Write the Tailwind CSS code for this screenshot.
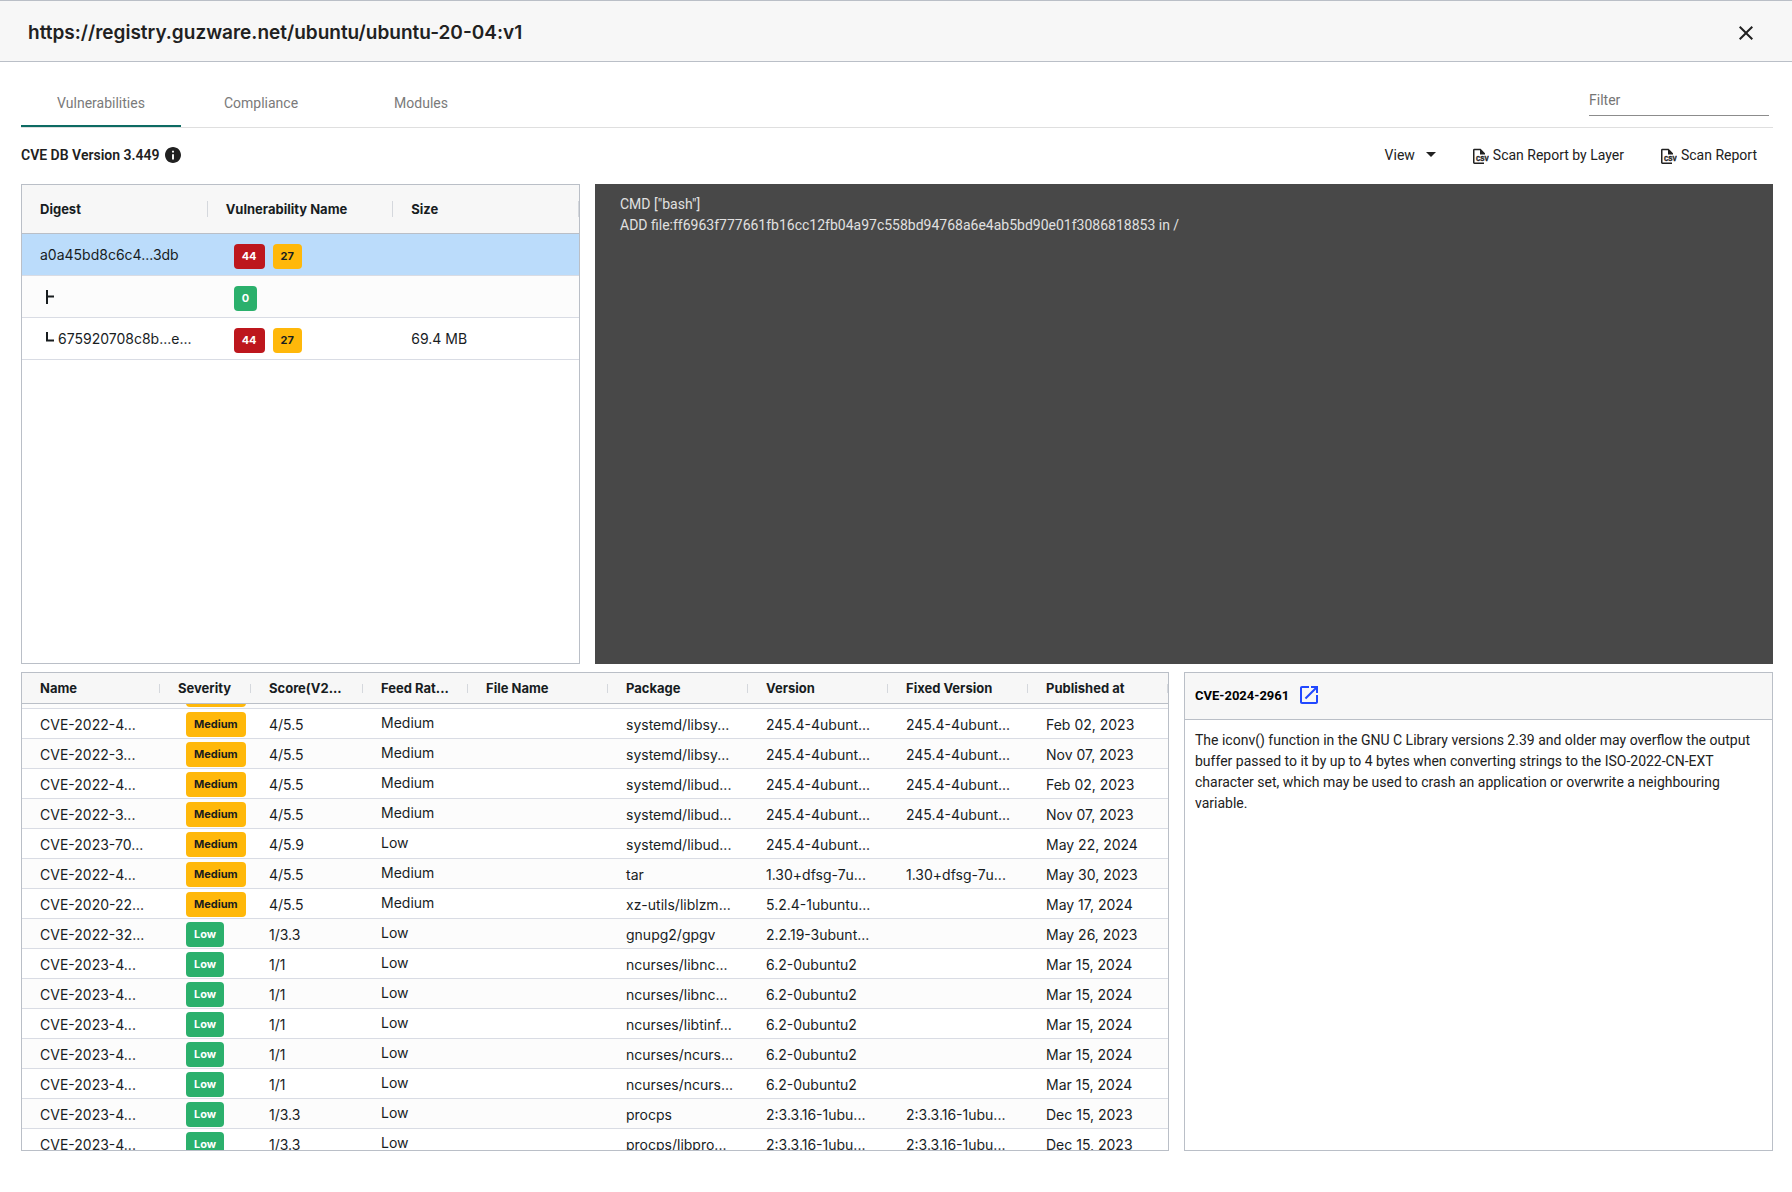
<!DOCTYPE html>
<html lang="en">
<head>
    <meta charset="UTF-8">
    <meta name="viewport" content="width=device-width, initial-scale=1.0">
    <title>Registry Scan Result</title>
    <script src="https://cdn.jsdelivr.net/npm/@tailwindcss/browser@4"></script>
</head>
<body class="min-h-screen bg-white font-['Roboto',sans-serif] text-sm text-[#212121]">
    <header class="flex h-[62px] items-center justify-between border-y border-[#babfc7] bg-[#f7f7f7] pt-1 pl-7 pr-[34px]">
        <h1 class="font-['Inter',sans-serif] text-[19px] leading-6 font-semibold">https://registry.guzware.net/ubuntu/ubuntu-20-04:v1</h1>
        <button type="button" aria-label="Close" class="cursor-pointer">
            <svg class="size-6" viewBox="0 0 24 24" fill="currentColor">
                <path d="M19 6.41L17.59 5 12 10.59 6.41 5 5 6.41 10.59 12 5 17.59 6.41 19 12 13.41 17.59 19 19 17.59 13.41 12z"/>
            </svg>
        </button>
    </header>

    <main class="pt-[17px] pr-[19px] pl-[21px]">
        <!-- Tabs and filter -->
        <div class="flex items-end justify-between border-b border-[#dfdfdf]">
            <nav class="flex h-12 text-[#7a7a7a]">
                <button type="button" class="w-40 cursor-pointer border-b-2 border-[#0d6b63] pt-[2px]">Vulnerabilities</button>
                <button type="button" class="w-40 cursor-pointer border-b-2 border-transparent pt-[2px]">Compliance</button>
                <button type="button" class="w-40 cursor-pointer border-b-2 border-transparent pt-[2px]">Modules</button>
            </nav>
            <input type="text" aria-label="Filter" placeholder="Filter" class="mr-1 mb-[11px] h-8 w-[180px] border-b border-[#8c8c8c] placeholder:text-[#757575] outline-none">
        </div>

        <!-- Toolbar -->
        <div class="flex h-14 items-center justify-between pb-[3px]">
            <div class="flex items-center gap-[5px] font-semibold">
                CVE DB Version 3.449
                <svg class="size-4" viewBox="2 2 20 20" fill="currentColor">
                    <path d="M12 2C6.48 2 2 6.48 2 12s4.48 10 10 10 10-4.48 10-10S17.52 2 12 2zm1.200 15.500h-2.400v-6.500h2.400v6.500zm0-8.500h-2.400V6.600h2.400V9z"/>
                </svg>
            </div>
            <div class="flex items-center pr-4">
                <button type="button" class="flex cursor-pointer items-center gap-[11px]">
                    View
                    <svg class="h-[5px] w-2.5" viewBox="0 0 10 5" fill="currentColor"><path d="M0 0h10L5 5z"/></svg>
                </button>
                <button type="button" class="ml-9 flex cursor-pointer items-center gap-1">
                    <svg class="mt-1 size-[17px]" viewBox="0 0 17 17" fill="currentColor">
                        <path d="M1 2.200Q1 .8 2.400 .8H8.600L13 5.200V6.500H8V2.200H2.500V14.600H12V16H2.400Q1 16 1 14.600z"/>
                        <text x="4" y="13" font-family="Liberation Mono" font-size="7" font-weight="700" stroke="currentColor" stroke-width=".3">CSV</text>
                    </svg>
                    Scan Report by Layer
                </button>
                <button type="button" class="ml-9 flex cursor-pointer items-center gap-1">
                    <svg class="mt-1 size-[17px]" viewBox="0 0 17 17" fill="currentColor">
                        <path d="M1 2.200Q1 .8 2.400 .8H8.600L13 5.200V6.500H8V2.200H2.500V14.600H12V16H2.400Q1 16 1 14.600z"/>
                        <text x="4" y="13" font-family="Liberation Mono" font-size="7" font-weight="700" stroke="currentColor" stroke-width=".3">CSV</text>
                    </svg>
                    Scan Report
                </button>
            </div>
        </div>

        <!-- Layers -->
        <div class="grid grid-cols-[559fr_1178fr] gap-[15px]">
            <section class="h-[480px] overflow-hidden border border-[#babfc7]">
                <table class="w-full table-fixed border-separate border-spacing-0 text-left font-['Inter',sans-serif] text-[#181d1f]">
                    <thead class="bg-[#f7f7f7] text-[13px]">
                        <tr class="h-[49px]">
                            <th class="border-b border-[#babfc7] p-0 font-bold"><div class="flex h-4 items-center border-r border-[#d5d8dd] pl-[18px]">Digest</div></th>
                            <th class="border-b border-[#babfc7] p-0 font-bold"><div class="flex h-4 items-center border-r border-[#d5d8dd] pl-[18px]">Vulnerability Name</div></th>
                            <th class="border-b border-[#babfc7] p-0 font-bold"><div class="flex h-4 items-center border-r border-[#d5d8dd] pl-[18px]">Size</div></th>
                        </tr>
                    </thead>
                    <tbody>
                        <tr class="h-[42px] bg-[#bbdcfb]">
                            <td class="border-b border-[#d9dce4] p-0 pl-[18px]">a0a45bd8c6c4...3db</td>
                            <td class="border-b border-[#d9dce4] p-0 pl-[26px]">
                                <div class="flex gap-2 pt-1 text-[11px] leading-[25px] font-bold">
                                    <span class="rounded bg-[#bd171d] px-2 text-white">44</span>
                                    <span class="rounded bg-[#ffb80a] px-2">27</span>
                                </div>
                            </td>
                            <td class="border-b border-[#d9dce4] p-0"></td>
                        </tr>
                        <tr class="h-[42px] bg-[#fcfcfc]">
                            <td class="border-b border-[#d9dce4] p-0 pl-6">
                                <svg class="h-3.5 w-2" viewBox="0 0 8 14" fill="none" stroke="currentColor" stroke-width="2"><path d="M1 0v14M1 6.500h7"/></svg>
                            </td>
                            <td class="border-b border-[#d9dce4] p-0 pl-[26px]">
                                <div class="flex gap-2 pt-1 text-[11px] leading-[25px] font-bold">
                                    <span class="rounded bg-[#2bb06c] px-2 text-white">0</span>
                                </div>
                            </td>
                            <td class="border-b border-[#d9dce4] p-0"></td>
                        </tr>
                        <tr class="h-[42px]">
                            <td class="border-b border-[#d9dce4] p-0 pl-6">
                                <div class="flex items-center gap-1">
                                    <svg class="h-3.5 w-2" viewBox="0 0 8 14" fill="none" stroke="currentColor" stroke-width="2"><path d="M1 0v8.500h7"/></svg>
                                    675920708c8b...e...
                                </div>
                            </td>
                            <td class="border-b border-[#d9dce4] p-0 pl-[26px]">
                                <div class="flex gap-2 pt-1 text-[11px] leading-[25px] font-bold">
                                    <span class="rounded bg-[#bd171d] px-2 text-white">44</span>
                                    <span class="rounded bg-[#ffb80a] px-2">27</span>
                                </div>
                            </td>
                            <td class="border-b border-[#d9dce4] p-0 pl-[18px]">69.4 MB</td>
                        </tr>
                    </tbody>
                </table>
            </section>
            <section class="h-[480px] bg-[#484848] px-[25px] py-[10px] leading-[21px] text-[#e0e0e0]">
                <p>CMD ["bash"]</p>
                <p>ADD file:ff6963f777661fb16cc12fb04a97c558bd94768a6e4ab5bd90e01f3086818853 in /</p>
            </section>
        </div>

        <!-- Vulnerabilities -->
        <div class="mt-2 grid grid-cols-[1148fr_589fr] gap-[15px]">
            <section class="flex h-[479px] flex-col border border-[#babfc7] font-['Inter',sans-serif] text-[#181d1f]">
                <table class="w-full table-fixed border-separate border-spacing-0 bg-[#f7f7f7] text-left text-[13px]">
                    <colgroup>
                        <col class="w-[138px]">
                        <col class="w-[91px]">
                        <col class="w-[112px]">
                        <col class="w-[105px]">
                        <col span="5">
                    </colgroup>
                    <thead>
                        <tr id="cveHead" class="h-[31px]"></tr>
                    </thead>
                </table>
                <div class="min-h-0 flex-1 overflow-hidden">
                    <table class="-mt-[25px] w-full table-fixed border-separate border-spacing-0 text-left">
                        <colgroup>
                            <col class="w-[138px]">
                            <col class="w-[91px]">
                            <col class="w-[112px]">
                            <col class="w-[105px]">
                            <col span="5">
                        </colgroup>
                        <tbody id="cveRows"></tbody>
                    </table>
                </div>
            </section>
            <section class="h-[479px] border border-[#babfc7]">
                <div class="flex h-[47px] items-center gap-2 border-b border-[#babfc7] bg-[#f7f7f7] px-2.5">
                    <h2 class="text-[13px] font-bold text-black">CVE-2024-2961</h2>
                    <a href="#" aria-label="Open CVE-2024-2961" class="pb-[3px] text-[#2148ff]">
                        <svg class="size-6" viewBox="0 0 24 24" fill="currentColor">
                            <path d="M19 19H5V5h7V3H5c-1.110 0-2 .9-2 2v14c0 1.100.89 2 2 2h14c1.100 0 2-.9 2-2v-7h-2v7zM14 3v2h3.590l-9.830 9.830 1.410 1.410L19 6.410V10h2V3h-7z"/>
                        </svg>
                    </a>
                </div>
                <p class="px-2.5 py-[10px] leading-[21px]">The iconv() function in the GNU C Library versions 2.39 and older may overflow the output buffer passed to it by up to 4 bytes when converting strings to the ISO-2022-CN-EXT character set, which may be used to crash an application or overwrite a neighbouring variable.</p>
            </section>
        </div>
    </main>

    <script>
        const headers = ['Name', 'Severity', 'Score(V2...', 'Feed Rat...', 'File Name', 'Package', 'Version', 'Fixed Version', 'Published at'];

        // name, severity, score, feed rating, package, version, fixed version, published
        const cves = [
            ['', 'Medium', '', '', '', '', '', ''],
            ['CVE-2022-4...', 'Medium', '4/5.5', 'Medium', 'systemd/libsy...', '245.4-4ubunt...', '245.4-4ubunt...', 'Feb 02, 2023'],
            ['CVE-2022-3...', 'Medium', '4/5.5', 'Medium', 'systemd/libsy...', '245.4-4ubunt...', '245.4-4ubunt...', 'Nov 07, 2023'],
            ['CVE-2022-4...', 'Medium', '4/5.5', 'Medium', 'systemd/libud...', '245.4-4ubunt...', '245.4-4ubunt...', 'Feb 02, 2023'],
            ['CVE-2022-3...', 'Medium', '4/5.5', 'Medium', 'systemd/libud...', '245.4-4ubunt...', '245.4-4ubunt...', 'Nov 07, 2023'],
            ['CVE-2023-70...', 'Medium', '4/5.9', 'Low', 'systemd/libud...', '245.4-4ubunt...', '', 'May 22, 2024'],
            ['CVE-2022-4...', 'Medium', '4/5.5', 'Medium', 'tar', '1.30+dfsg-7u...', '1.30+dfsg-7u...', 'May 30, 2023'],
            ['CVE-2020-22...', 'Medium', '4/5.5', 'Medium', 'xz-utils/liblzm...', '5.2.4-1ubuntu...', '', 'May 17, 2024'],
            ['CVE-2022-32...', 'Low', '1/3.3', 'Low', 'gnupg2/gpgv', '2.2.19-3ubunt...', '', 'May 26, 2023'],
            ['CVE-2023-4...', 'Low', '1/1', 'Low', 'ncurses/libnc...', '6.2-0ubuntu2', '', 'Mar 15, 2024'],
            ['CVE-2023-4...', 'Low', '1/1', 'Low', 'ncurses/libnc...', '6.2-0ubuntu2', '', 'Mar 15, 2024'],
            ['CVE-2023-4...', 'Low', '1/1', 'Low', 'ncurses/libtinf...', '6.2-0ubuntu2', '', 'Mar 15, 2024'],
            ['CVE-2023-4...', 'Low', '1/1', 'Low', 'ncurses/ncurs...', '6.2-0ubuntu2', '', 'Mar 15, 2024'],
            ['CVE-2023-4...', 'Low', '1/1', 'Low', 'ncurses/ncurs...', '6.2-0ubuntu2', '', 'Mar 15, 2024'],
            ['CVE-2023-4...', 'Low', '1/3.3', 'Low', 'procps', '2:3.3.16-1ubu...', '2:3.3.16-1ubu...', 'Dec 15, 2023'],
            ['CVE-2023-4...', 'Low', '1/3.3', 'Low', 'procps/libpro...', '2:3.3.16-1ubu...', '2:3.3.16-1ubu...', 'Dec 15, 2023']
        ];

        const badges = {
            Medium: 'bg-[#ffb80a]',
            Low: 'bg-[#2bb06c] text-white'
        };

        document.getElementById('cveHead').innerHTML = headers.map(h => `
            <th class="border-b border-[#babfc7] p-0 font-bold whitespace-nowrap">
                <div class="flex h-[9px] items-center border-r border-[#d5d8dd] pl-[18px]">${h}</div>
            </th>`).join('');

        const cell = (text, extra = 'pt-[3px]') =>
            `<td class="border-b border-[#d9dce4] p-0 pl-[18px] leading-5 whitespace-nowrap ${extra}">${text}</td>`;

        document.getElementById('cveRows').innerHTML = cves.map(c => `
            <tr class="h-[30px] bg-white odd:bg-[#fcfcfc]">
                ${cell(c[0])}
                <td class="border-b border-[#d9dce4] p-0 pt-[2px] pl-[26px]">
                    <span class="block w-fit rounded px-2 text-[11px] leading-[25px] font-bold ${badges[c[1]]}">${c[1]}</span>
                </td>
                ${cell(c[2])}
                ${cell(c[3], 'pb-[2px]')}
                ${cell('')}
                ${cell(c[4])}
                ${cell(c[5])}
                ${cell(c[6])}
                ${cell(c[7])}
            </tr>`).join('');
    </script>
</body>
</html>
